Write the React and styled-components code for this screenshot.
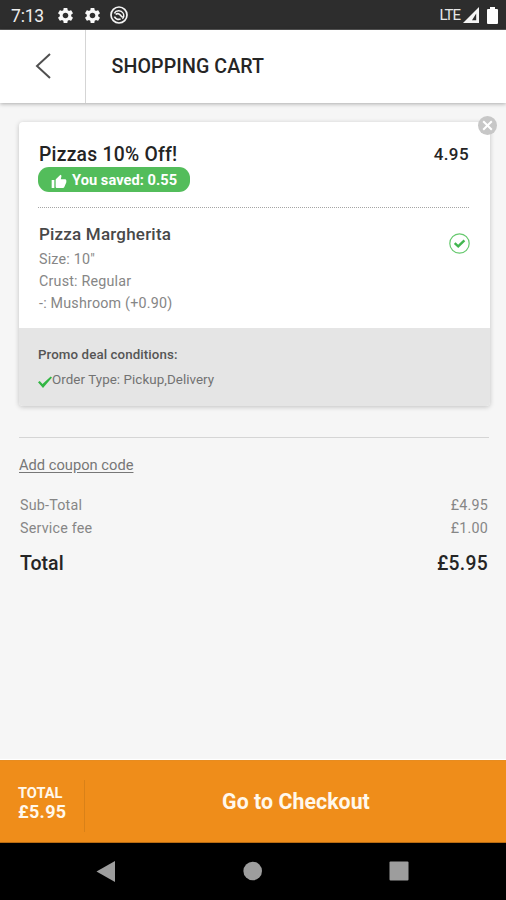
import React from 'react';
import styled, { createGlobalStyle } from 'styled-components';
import { MdSettings, MdThumbUp } from 'react-icons/md';

const GlobalStyle = createGlobalStyle`
  * { box-sizing: border-box; }
  body { margin: 0; background: #f6f6f6; font-family: Roboto, "Liberation Sans", sans-serif; }
  svg { display: block; flex: none; }
`;

const Screen = styled.div`
  display: flex;
  flex-direction: column;
  width: 506px;
  height: 900px;
  overflow: hidden;
  background: #f6f6f6;
`;

const Text = styled.span`
  display: block;
  white-space: nowrap;
  font-size: ${(p) => p.$size}px;
  line-height: ${(p) => p.$line || 22}px;
  font-weight: ${(p) => p.$weight || 400};
  color: ${(p) => p.$color || '#868686'};
  letter-spacing: ${(p) => p.$track || 0}px;
`;

const StatusBar = styled.div`
  display: flex;
  flex: none;
  align-items: center;
  justify-content: space-between;
  height: 30px;
  padding: 1px 8px 0 11px;
  background: #2d2d2d;
  border-bottom: 1px solid #555;
`;

const StatusGroup = styled.div`
  display: flex;
  align-items: center;
  gap: ${(p) => p.$gap}px;
`;

const Clock = styled.div`
  padding-top: 2px;
`;

const Header = styled.header`
  display: flex;
  flex: none;
  z-index: 1;
  height: 73px;
  background: #fff;
  box-shadow: 0 1px 4px rgba(0, 0, 0, 0.3);
`;

const BackButton = styled.button`
  display: flex;
  align-items: center;
  width: 86px;
  padding: 0 0 1px 35px;
  border: 0;
  border-right: 1px solid #d5d5d5;
  background: none;
`;

const HeaderTitle = styled.h1`
  margin: 0;
  padding: 26px 0 0 25.5px;
`;

const Content = styled.main`
  flex: 1;
  padding: 19px 17px 0 19px;
`;

const Card = styled.section`
  position: relative;
  width: 471px;
  height: 284px;
  border-radius: 4px;
  background: #fff;
  box-shadow: 0 1px 5px rgba(0, 0, 0, 0.22);
`;

const CloseButton = styled.button`
  position: absolute;
  top: -6px;
  right: -7px;
  padding: 0;
  border: 0;
  background: none;
`;

const DealHeader = styled.div`
  display: flex;
  justify-content: space-between;
  height: 86px;
  margin: 0 21px 0 19px;
  padding-top: 21px;
  border-bottom: 1px dotted #a5a5a5;
`;

const DealTitle = styled.h2`
  margin: 0;
  padding: 1px 0 0 1px;
`;

const SavedBadge = styled.div`
  display: flex;
  align-items: center;
  gap: 5px;
  width: 152px;
  height: 25px;
  margin-top: 1px;
  padding: 1px 0 0 13px;
  border-radius: 11px;
  background: #53bd5b;

  svg { margin-top: 3px; }
`;

const DealItem = styled.div`
  display: flex;
  justify-content: space-between;
  height: 120px;
  padding: 14px 20px 0 20px;
`;

const ItemName = styled.h3`
  margin: 0 0 2px;
`;

const CheckSlot = styled.div`
  padding-top: 11px;
`;

const Conditions = styled.div`
  height: 78px;
  padding: 16px 19px 0;
  border-radius: 0 0 4px 4px;
  background: #e5e5e5;
`;

const ConditionRow = styled.div`
  display: flex;
  align-items: center;
  margin-top: 3px;

  svg { margin-top: 3px; }
`;

const Summary = styled.section`
  width: 470px;
  margin-top: 31px;
  padding: 16px 1px 0 0;
  border-top: 1px solid #d5d5d5;
`;

const CouponLink = styled.a`
  display: inline-block;
  margin-bottom: 18px;
  color: #777;
  text-decoration: underline;
  text-underline-offset: 2px;
`;

const SummaryRow = styled.div`
  display: flex;
  justify-content: space-between;
  padding-left: 1px;
  margin-top: ${(p) => p.$top || 0}px;
`;

const CheckoutBar = styled.footer`
  display: flex;
  flex: none;
  height: 83px;
  border-top: 1px solid #e78c20;
  border-bottom: 1px solid #b76b13;
  background: #ef8d1a;
  box-shadow: 0 -1px 1px #fff;
`;

const CheckoutTotal = styled.div`
  width: 85px;
  height: 52px;
  margin-top: 19px;
  padding: 4px 0 0 18px;
  border-right: 1px solid #d98118;
`;

const CheckoutButton = styled.button`
  flex: 1;
  padding: 0 0 0 1px;
  border: 0;
  background: none;
  font-family: inherit;
  text-align: center;
`;

const NavBar = styled.nav`
  display: flex;
  flex: none;
  justify-content: space-between;
  align-items: center;
  height: 57px;
  padding: 0 97px 1px 96px;
  background: #000;
`;

const DoNotDisturbIcon = () => (
  <svg width="18" height="18" viewBox="0 0 18 18" fill="none" stroke="#f4f4f4">
    <circle cx="9" cy="9" r="8" strokeWidth="1.7" />
    <path d="M4.3 7.3C6 4.2 11 3.8 13 7c1.3 2.2.5 4.6-.6 5.8" strokeWidth="1.4" />
    <path d="M4.4 10.7c1.2 2.4 4 3.4 6.2 2.2M5.6 8.4c2-1.4 3.4-.9 4.4.4.7 1 1.4 1.8 2.6 2.5" strokeWidth="1.6" />
  </svg>
);

const SignalIcon = () => (
  <svg width="16" height="16" viewBox="0 0 16 16" fill="#f4f4f4" fillRule="evenodd">
    <path d="M0 16 16 0v16zM9 13.3h4.2V6.5z" />
  </svg>
);

const BatteryIcon = () => (
  <svg width="11" height="17" viewBox="0 0 11 17" fill="#fff">
    <path d="M3 0h5v2h2q1 0 1 1v13q0 1-1 1H1q-1 0-1-1V3q0-1 1-1h2z" />
  </svg>
);

const BackIcon = () => (
  <svg width="17" height="26" viewBox="0 0 17 26" fill="none" stroke="#505050" strokeWidth="2">
    <path d="M15 1 2 13l13 12" />
  </svg>
);

const CloseIcon = () => (
  <svg width="19" height="19" viewBox="0 0 19 19">
    <circle cx="9.5" cy="9.5" r="9.5" fill="#c7c7c7" />
    <path d="m5.2 5.2 8.6 8.6m0-8.6-8.6 8.6" stroke="#fff" strokeWidth="2" />
  </svg>
);

const CircleCheckIcon = () => (
  <svg width="21" height="21" viewBox="0 0 21 21" fill="none">
    <circle cx="10.5" cy="10.5" r="9.7" stroke="#66c96e" strokeWidth="1.2" />
    <path d="m5.7 10.2 3.5 3.2 6.2-6.1" stroke="#42b650" strokeWidth="2.4" />
  </svg>
);

const CheckIcon = () => (
  <svg width="14" height="12" viewBox="0 0 14 12">
    <path d="M0 6.2 1.7 5l2.8 3L12.7.4 14 1.5 5 12z" fill="#32b643" />
  </svg>
);

export default function App() {
  return (
    <Screen>
      <GlobalStyle />
      <StatusBar>
        <StatusGroup $gap={12.5}>
          <Clock><Text $size={17.5} $color="#eee" $track={-0.2}>7:13</Text></Clock>
          <StatusGroup $gap={8}>
            <MdSettings size={19} color="#f8f8f8" />
            <MdSettings size={19} color="#f8f8f8" />
            <DoNotDisturbIcon />
          </StatusGroup>
        </StatusGroup>
        <StatusGroup $gap={8}>
          <StatusGroup $gap={3}>
            <Text $size={15} $color="#e5e5e5" $track={-1}>LTE</Text>
            <SignalIcon />
          </StatusGroup>
          <BatteryIcon />
        </StatusGroup>
      </StatusBar>

      <Header>
        <BackButton aria-label="Back"><BackIcon /></BackButton>
        <HeaderTitle>
          <Text $size={19.6} $weight={500} $color="#252525" $track={0.1}>SHOPPING CART</Text>
        </HeaderTitle>
      </Header>

      <Content>
        <Card>
          <CloseButton aria-label="Remove"><CloseIcon /></CloseButton>
          <DealHeader>
            <div>
              <DealTitle>
                <Text $size={19.3} $weight={500} $color="#242424" $track={0.25}>Pizzas 10% Off!</Text>
              </DealTitle>
              <SavedBadge>
                <MdThumbUp size={16} color="#fff" />
                <Text $size={14.6} $weight={700} $color="#fff" $track={0.06}>You saved: 0.55</Text>
              </SavedBadge>
            </div>
            <Text $size={17} $weight={500} $color="#242424" $track={0.4}>4.95</Text>
          </DealHeader>
          <DealItem>
            <div>
              <ItemName>
                <Text $size={17} $weight={500} $color="#484848" $track={0.2} $line={24}>Pizza Margherita</Text>
              </ItemName>
              <Text $size={14.3} $track={0.2}>Size: 10″</Text>
              <Text $size={14.3} $track={0.2}>Crust: Regular</Text>
              <Text $size={14.3} $track={0.2}>-: Mushroom (+0.90)</Text>
            </div>
            <CheckSlot><CircleCheckIcon /></CheckSlot>
          </DealItem>
          <Conditions>
            <Text $size={13.3} $weight={500} $color="#555" $track={0.1}>Promo deal conditions:</Text>
            <ConditionRow>
              <CheckIcon />
              <Text $size={13.4} $color="#727272" $track={0.05}>Order Type: Pickup,Delivery</Text>
            </ConditionRow>
          </Conditions>
        </Card>

        <Summary>
          <CouponLink><Text $size={14.7} $color="#777">Add coupon code</Text></CouponLink>
          <SummaryRow>
            <Text $size={14.3} $track={0.2}>Sub-Total</Text>
            <Text $size={14.3} $track={0.2}>£4.95</Text>
          </SummaryRow>
          <SummaryRow $top={1}>
            <Text $size={14.3} $track={0.2}>Service fee</Text>
            <Text $size={14.3} $track={0.2}>£1.00</Text>
          </SummaryRow>
          <SummaryRow $top={14}>
            <Text $size={19.5} $weight={500} $color="#252525">Total</Text>
            <Text $size={19.3} $weight={500} $color="#252525" $track={0.3}>£5.95</Text>
          </SummaryRow>
        </Summary>
      </Content>

      <CheckoutBar>
        <CheckoutTotal>
          <Text $size={14.6} $weight={700} $color="#fff8ec" $line={18}>TOTAL</Text>
          <Text $size={18} $weight={700} $color="#fff8ec" $line={19} $track={0.3}>£5.95</Text>
        </CheckoutTotal>
        <CheckoutButton>
          <Text $size={21.3} $weight={700} $color="#fff8ec" $track={0.05}>Go to Checkout</Text>
        </CheckoutButton>
      </CheckoutBar>

      <NavBar>
        <svg width="19" height="21" viewBox="0 0 19 21" fill="#9d9d9d"><path d="M.5 10.5 19 0v21z" /></svg>
        <svg width="20" height="20" viewBox="0 0 20 20" fill="#9d9d9d"><circle cx="10.7" cy="10" r="9.3" /></svg>
        <svg width="20" height="20" viewBox="0 0 20 20" fill="#9d9d9d"><rect x=".5" y=".5" width="19" height="19" rx="1" /></svg>
      </NavBar>
    </Screen>
  );
}
